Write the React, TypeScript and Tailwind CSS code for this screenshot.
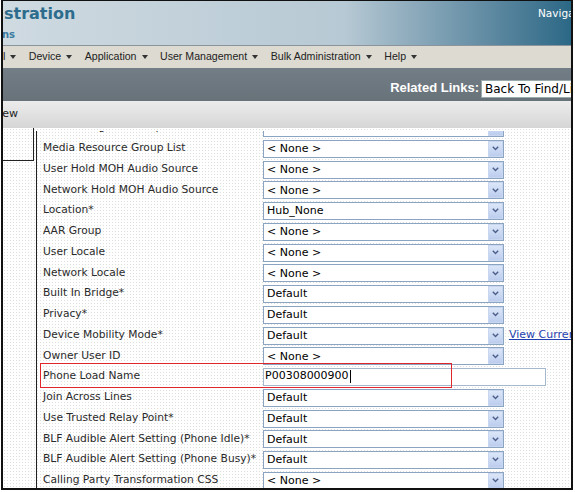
import React from "react";

type Row = { label: string; value: string; kind?: "input"; link?: string; highlight?: boolean };

const rows: Row[] = [
  { label: "AAR Calling Search Space", value: "< None >" },
  { label: "Media Resource Group List", value: "< None >" },
  { label: "User Hold MOH Audio Source", value: "< None >" },
  { label: "Network Hold MOH Audio Source", value: "< None >" },
  { label: "Location*", value: "Hub_None" },
  { label: "AAR Group", value: "< None >" },
  { label: "User Locale", value: "< None >" },
  { label: "Network Locale", value: "< None >" },
  { label: "Built In Bridge*", value: "Default" },
  { label: "Privacy*", value: "Default" },
  { label: "Device Mobility Mode*", value: "Default", link: "View Current Device Mobility Settings" },
  { label: "Owner User ID", value: "< None >" },
  { label: "Phone Load Name", value: "P00308000900", kind: "input", highlight: true },
  { label: "Join Across Lines", value: "Default" },
  { label: "Use Trusted Relay Point*", value: "Default" },
  { label: "BLF Audible Alert Setting (Phone Idle)*", value: "Default" },
  { label: "BLF Audible Alert Setting (Phone Busy)*", value: "Default" },
  { label: "Calling Party Transformation CSS", value: "< None >" },
];

function Arrow() {
  return (
    <div className="w-[15px] h-[16px] bg-gradient-to-b from-[#dbe6f8] to-[#bccdee] border border-[#c8d6ef] flex items-center justify-center">
      <svg width="7" height="5" viewBox="0 0 7 5">
        <path d="M0.8 0.8 L3.5 3.6 L6.2 0.8" fill="none" stroke="#4c5f8a" strokeWidth="1.4" />
      </svg>
    </div>
  );
}

function Select({ value }: { value: string }) {
  return (
    <div className="w-[241px] h-[18px] shrink-0 border border-[#8aa4c2] bg-white flex items-center justify-between pl-[3px] pr-0">
      <span className="text-[11px] text-black leading-none font-['DejaVu_Sans',sans-serif]">{value}</span>
      <Arrow />
    </div>
  );
}

const menu = ["Voice Mail", "Device", "Application", "User Management", "Bulk Administration", "Help"];

export default function App() {
  return (
    <div className="w-[575px] h-[492px] bg-white overflow-hidden">
      <div className="ml-[1px] w-[572px] h-[490px] border-l-2 border-r-2 border-b-2 border-t border-[#111] flex flex-col overflow-hidden">
        {/* header */}
        <div className="h-[44px] shrink-0 bg-gradient-to-r from-[#cfdae1] via-[#b7c9d4] via-60% to-[#2b6886] flex justify-between overflow-hidden">
          <div className="pl-[1px] pt-[3px] flex flex-col">
            <span className="text-[16px] font-bold text-[#2d6c8c] leading-[20px] font-['DejaVu_Sans',sans-serif]">stration</span>
            <span className="text-[10px] font-bold text-[#3b7aa0] leading-[12px] mt-[5px] -ml-[2px] font-['DejaVu_Sans',sans-serif]">ns</span>
          </div>
          <span className="w-[33px] shrink-0 overflow-hidden whitespace-nowrap text-[10.5px] text-white pt-[5px] font-['DejaVu_Sans',sans-serif]">Navigation</span>
        </div>
        {/* menu */}
        <div className="h-[23px] shrink-0 bg-[#dddad1] border-t border-[#8b949a] flex items-center gap-[12.5px] overflow-hidden font-['Liberation_Sans',sans-serif] text-[10.6px] text-[#222]">
          {menu.map((m, i) => (
            <span key={m} className={`flex items-center gap-[5px] whitespace-nowrap shrink-0 ${i === 0 ? "-ml-[46px]" : ""}`}>
              {m}
              <svg width="6" height="4" viewBox="0 0 6 4">
                <path d="M0 0 L6 0 L3 4 Z" fill="#333" />
              </svg>
            </span>
          ))}
        </div>
        {/* dark bar */}
        <div className="h-[33px] shrink-0 bg-gradient-to-b from-[#737d86] to-[#687279] flex items-end justify-end pb-[3px] overflow-hidden">
          <span className="text-[13px] font-bold text-white mr-[2px] mb-[1px] font-['Liberation_Sans',sans-serif] whitespace-nowrap">Related Links:</span>
          <div className="w-[100px] -mr-[10px] h-[18px] shrink-0 bg-white border border-[#9aa] flex items-center pl-[3px] font-['DejaVu_Sans',sans-serif] text-[12px] text-black whitespace-nowrap overflow-hidden">
            Back To Find/List
          </div>
        </div>
        {/* toolbar */}
        <div className="h-[27px] shrink-0 bg-gradient-to-b from-[#ececec] to-[#d6d6d6] flex items-center overflow-hidden">
          <span className="-ml-[9px] text-[11px] text-[#222] font-['DejaVu_Sans',sans-serif]">New</span>
        </div>
        {/* content */}
        <div className="flex-1 flex bg-[radial-gradient(circle,#dedede_0.7px,transparent_0.8px)] bg-[length:3px_3px] overflow-hidden">
          <div className="w-[31px] h-[33px] border-r border-b border-[#222] shrink-0" />
          <div className="ml-[2px] mt-[3px] flex-1 border-l border-[#222] overflow-hidden">
            <div className="-mt-[14px] pl-[6px] font-['DejaVu_Sans',sans-serif]">
              {rows.map((r, i) => (
                <div key={r.label} className={`relative flex items-center ${i % 4 === 3 ? "h-[20px]" : "h-[21px]"}`}>
                  <span className="w-[220px] shrink-0 text-[10.7px] text-[#2a2a2a] whitespace-nowrap">{r.label}</span>
                  {r.kind === "input" ? (
                    <div className="w-[283px] h-[18px] shrink-0 border border-[#a6b8cc] bg-white flex items-center pl-[1px] text-[11px] text-black">
                      {r.value}
                      <span className="inline-block w-px h-[13px] bg-black ml-[1px]" />
                    </div>
                  ) : (
                    <Select value={r.value} />
                  )}
                  {r.link && (
                    <span className="ml-[5px] shrink-0 text-[11px] text-[#1f3fae] underline whitespace-nowrap">{r.link}</span>
                  )}
                  {r.highlight && (
                    <div className="absolute left-[-3px] top-[-3px] w-[412px] h-[25px] border border-[#e0262a] pointer-events-none" />
                  )}
                </div>
              ))}
            </div>
          </div>
        </div>
      </div>
    </div>
  );
}
